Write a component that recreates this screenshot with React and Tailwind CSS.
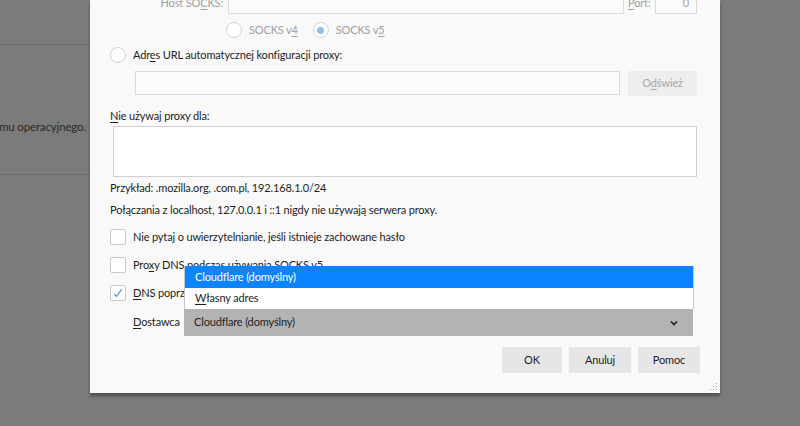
import React from 'react';

const FONT = { fontFamily: 'Lato, "Noto Sans", sans-serif' };

const U = ({ children }) => <span className="underline underline-offset-2">{children}</span>;

const Radio = ({ checked, disabled }) => (
  <span className="w-4 h-4 rounded-full border border-[#d2d2d2] bg-white flex items-center justify-center shrink-0">
    {checked && <span className={`w-[7px] h-[7px] rounded-full ${disabled ? 'bg-[#8cc3e8]' : 'bg-[#0a84ff]'}`} />}
  </span>
);

const Checkbox = ({ checked }) => (
  <span className="w-4 h-4 rounded-[2px] border border-[#c9c9c9] bg-white flex items-center justify-center shrink-0">
    {checked && (
      <svg width="12" height="12" viewBox="0 0 12 12">
        <path d="M2.2 6.8 L4.5 9.4 L9.8 2.2" fill="none" stroke="#4a98d8" strokeWidth="1.2" />
      </svg>
    )}
  </span>
);

export default function App() {
  return (
    <div className="relative w-[800px] h-[426px] overflow-hidden bg-[#7b7b7b] text-[11px] tracking-[-0.15px] text-[#1e1e1e]" style={FONT}>
      {/* page behind the dialog */}
      <div className="flex flex-col w-[90px]">
        <div className="h-[44px]" />
        <div className="h-px bg-[#6c6c6c]" />
        <div className="h-[129px] flex justify-end pr-[4px] pt-[74px] text-[#2a2a2a] whitespace-nowrap overflow-hidden leading-[16px] text-[11.5px]">
          mu operacyjnego.
        </div>
        <div className="h-px bg-[#6c6c6c]" />
      </div>

      {/* dialog */}
      <div className="absolute left-[90px] top-0 w-[630px] h-[393px] bg-[#f9f9f9] shadow-[0_3px_3px_rgba(0,0,0,0.35)] flex flex-col pl-[20px] pr-[23px]">
        {/* Host SOCKS row */}
        <div className="flex items-center h-[22px] -mt-[8px] text-[#a0a0a0]">
          <span className="w-[118px] text-right pr-[5px] whitespace-nowrap">Host SO<U>C</U>KS:</span>
          <div className="flex-1 h-[22px] border border-[#dadada] bg-[#fbfbfb]" />
          <span className="ml-[4px] w-[27px]"><U>P</U>ort:</span>
          <div className="w-[42px] h-[22px] border border-[#dadada] bg-[#fbfbfb] text-right pr-[7px] leading-[20px]">0</div>
        </div>
        {/* SOCKS version */}
        <div className="flex items-center h-[16px] mt-[8px] pl-[116px] text-[#a0a0a0]">
          <Radio />
          <span className="ml-[7px]">SOCKS v<U>4</U></span>
          <span className="ml-[15px]"><Radio checked disabled /></span>
          <span className="ml-[7px]">SOCKS v<U>5</U></span>
        </div>
        {/* auto config */}
        <div className="flex items-center h-[16px] mt-[9px]">
          <Radio />
          <span className="ml-[7px]">Adr<U>e</U>s URL automatycznej konfiguracji proxy:</span>
        </div>
        <div className="flex items-center h-[24px] mt-[8px] pl-[25px]">
          <div className="flex-1 h-[24px] border border-[#dadada] bg-[#fbfbfb]" />
          <div className="ml-[8px] w-[69px] h-[25px] bg-[#eeeeee] text-[#a6a6a6] flex items-center justify-center">
            O<U>d</U>śwież
          </div>
        </div>
        {/* no proxy */}
        <div className="h-[16px] mt-[13px] leading-[16px]"><U>N</U>ie używaj proxy dla:</div>
        <div className="h-[51px] mt-[2px] ml-[3px] border border-[#cfcfcf] bg-white" />
        <div className="h-[16px] mt-[3px] leading-[16px]">Przykład: .mozilla.org, .com.pl, 192.168.1.0/24</div>
        <div className="h-[16px] mt-[6px] leading-[16px]">Połączania z localhost, 127.0.0.1 i ::1 nigdy nie używają serwera proxy.</div>
        {/* checkboxes */}
        <div className="flex items-center h-[16px] mt-[11px]">
          <Checkbox />
          <span className="ml-[7px]">Nie pytaj o uwierzytelnianie, jeśli istnieje zachowane hasło</span>
        </div>
        <div className="flex items-center h-[16px] mt-[12px]">
          <Checkbox />
          <span className="ml-[7px]">Pro<U>x</U>y DNS podczas używania SOCKS v5</span>
        </div>
        <div className="flex items-center h-[16px] mt-[12px]">
          <Checkbox checked />
          <span className="ml-[7px]"><U>D</U>NS poprzez HTTPS</span>
        </div>
        {/* provider */}
        <div className="flex items-center h-[27px] mt-[8px] pl-[23px] pr-[4px]">
          <span className="w-[51px]"><U>D</U>ostawca</span>
          <div className="flex-1 h-[27px] bg-[#b3b3b3] flex items-center pl-[10px] pr-[14px]">
            <span className="flex-1">Cloudflare (domyślny)</span>
            <svg width="10" height="8" viewBox="0 0 10 8">
              <path d="M2 2.5 L5 5.5 L8 2.5" fill="none" stroke="#1e1e1e" strokeWidth="1.7" />
            </svg>
          </div>
        </div>
        {/* buttons */}
        <div className="flex justify-end gap-[7px] mt-[11px] -mr-[3px]">
          <button className="w-[60px] h-[26px] bg-[#e6e6e6]">OK</button>
          <button className="w-[62px] h-[26px] bg-[#e6e6e6]">Anuluj</button>
          <button className="w-[62px] h-[26px] bg-[#e6e6e6]">Pomoc</button>
        </div>
        {/* resize grip */}
        <svg className="absolute right-[2px] bottom-[2px]" width="8" height="8" viewBox="0 0 8 8">
          <rect x="6" y="0" width="1" height="1" fill="#a0a0a0" />
          <rect x="3" y="3" width="1" height="1" fill="#a0a0a0" />
          <rect x="6" y="3" width="1" height="1" fill="#a0a0a0" />
          <rect x="0" y="6" width="1" height="1" fill="#a0a0a0" />
          <rect x="3" y="6" width="1" height="1" fill="#a0a0a0" />
          <rect x="6" y="6" width="1" height="1" fill="#a0a0a0" />
        </svg>
      </div>

      {/* open dropdown list */}
      <div className="absolute left-[184px] top-[266px] w-[509px] flex flex-col border-l border-[#c8c8c8] shadow-[1px_0_0_#c8c8c8]">
        <div className="h-[22px] bg-[#0a84ff] text-white flex items-center pl-[10px]">Cloudflare (domyślny)</div>
        <div className="h-[21px] bg-white flex items-center pl-[10px]"><U>W</U>łasny adres</div>
      </div>
    </div>
  );
}
